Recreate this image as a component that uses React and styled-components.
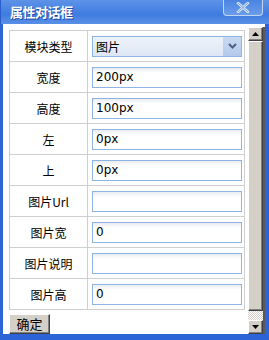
import React from "react";
import styled, { createGlobalStyle } from "styled-components";

const rows = [
  { label: "模块类型", type: "select", value: "图片" },
  { label: "宽度", value: "200px" },
  { label: "高度", value: "100px" },
  { label: "左", value: "0px" },
  { label: "上", value: "0px" },
  { label: "图片Url", value: "" },
  { label: "图片宽", value: "0" },
  { label: "图片说明", value: "" },
  { label: "图片高", value: "0" },
];

const App = () => {
  return (
    <>
      <GlobalStyle />
      <Window>
        <TitleBar>
          <Title>属性对话框</Title>
          <CloseButton>
            <svg width="14" height="11" viewBox="0 0 14 11">
              <path
                d="M2 1 L12 10 M12 1 L2 10"
                stroke="#dfe9f7"
                strokeWidth="2.6"
                strokeLinecap="round"
              />
              <path
                d="M2 1 L12 10 M12 1 L2 10"
                stroke="#6f96d6"
                strokeWidth="0.9"
                strokeLinecap="round"
              />
            </svg>
          </CloseButton>
        </TitleBar>
        <Body>
          <Content>
            <Table>
              <tbody>
                {rows.map((row) => (
                  <tr key={row.label}>
                    <LabelCell>{row.label}</LabelCell>
                    <FieldCell>
                      {row.type === "select" ? (
                        <Select>
                          <SelectText>{row.value}</SelectText>
                          <SelectArrow>
                            <svg width="9" height="6" viewBox="0 0 9 6">
                              <path
                                d="M1 1 L4.5 4.5 L8 1"
                                fill="none"
                                stroke="#4d6185"
                                strokeWidth="2"
                              />
                            </svg>
                          </SelectArrow>
                        </Select>
                      ) : (
                        <Input defaultValue={row.value} />
                      )}
                    </FieldCell>
                  </tr>
                ))}
              </tbody>
            </Table>
            <OkButton>确定</OkButton>
          </Content>
          <Scrollbar>
            <ScrollButton>
              <svg width="7" height="4" viewBox="0 0 7 4">
                <path d="M0 4 L3.5 0 L7 4 Z" fill="#000" />
              </svg>
            </ScrollButton>
            <Thumb />
            <Track />
            <ScrollButton>
              <svg width="7" height="4" viewBox="0 0 7 4">
                <path d="M0 0 L3.5 4 L7 0 Z" fill="#000" />
              </svg>
            </ScrollButton>
          </Scrollbar>
        </Body>
      </Window>
    </>
  );
};

const GlobalStyle = createGlobalStyle`
  body {
    margin: 0;
    background: #fff;
    font-family: "Noto Sans CJK SC", "DejaVu Sans", sans-serif;
  }
`;

const Window = styled.div`
  width: 269px;
  height: 340px;
  display: flex;
  flex-direction: column;
  box-sizing: border-box;
  background: #2c63d6;
`;

const TitleBar = styled.div`
  height: 24px;
  flex-shrink: 0;
  display: flex;
  align-items: flex-start;
  justify-content: space-between;
  padding: 0 6px 0 9px;
  background: linear-gradient(#5d93e8, #3f7ce0 60%, #5a90e6);
  border-left: 1px solid #2a5ccc;
`;

const Title = styled.div`
  margin-top: 3px;
  color: #fff;
  font-size: 13px;
  font-weight: bold;
  line-height: 18px;
  letter-spacing: -0.5px;
  text-shadow: 1px 1px 0 #1d4ba8;
`;

const CloseButton = styled.div`
  width: 40px;
  height: 16px;
  box-sizing: border-box;
  display: flex;
  align-items: center;
  justify-content: center;
  border: 1px solid #c2d6f2;
  border-top: none;
  border-radius: 0 0 4px 4px;
  background: linear-gradient(#4a84e2, #6a9de9);
`;

const Body = styled.div`
  flex: 1;
  display: flex;
  background: #fff;
  margin: 0 4px 6px 3px;
  min-height: 0;
`;

const Content = styled.div`
  flex: 1;
  padding: 6px 4px 0 6px;
  display: flex;
  flex-direction: column;
  align-items: flex-start;
  overflow: hidden;
`;

const Table = styled.table`
  width: 236px;
  border-collapse: collapse;
  border: 1px solid #cfcfcf;
`;

const LabelCell = styled.td`
  width: 77px;
  height: 30px;
  padding: 0;
  border: 1px solid #cfcfcf;
  text-align: center;
  font-size: 12px;
  color: #000;
`;

const FieldCell = styled.td`
  padding: 0 0 0 4px;
  border: 1px solid #cfcfcf;
  vertical-align: middle;
`;

const Input = styled.input`
  display: block;
  width: 150px;
  height: 21px;
  box-sizing: border-box;
  border: 1px solid #8fb3e3;
  padding: 0 3px;
  margin: 0;
  background: linear-gradient(#e9ecef 0, #fff 5px);
  font-family: "DejaVu Sans", sans-serif;
  font-size: 12px;
  color: #000;
  outline: none;
`;

const Select = styled.div`
  width: 150px;
  height: 21px;
  box-sizing: border-box;
  border: 1px solid #8fb3e3;
  display: flex;
  align-items: stretch;
  background: linear-gradient(#eef3fa, #dde7f4);
`;

const SelectText = styled.div`
  flex: 1;
  padding-left: 3px;
  font-size: 12px;
  line-height: 19px;
  color: #000;
`;

const SelectArrow = styled.div`
  width: 18px;
  display: flex;
  align-items: center;
  justify-content: center;
  background: linear-gradient(#c9daf1, #b3caeb);
`;

const OkButton = styled.button`
  margin-top: 4px;
  width: 41px;
  height: 20px;
  padding: 0;
  box-sizing: border-box;
  background: #d4d0c8;
  border: 1px solid;
  border-color: #fff #404040 #404040 #fff;
  box-shadow: inset -1px -1px 0 #808080;
  font-family: "Noto Sans CJK SC", sans-serif;
  font-size: 13px;
  line-height: 16px;
  color: #000;
`;

const Scrollbar = styled.div`
  width: 15px;
  margin-top: 3px;
  display: flex;
  flex-direction: column;
  border-right: 2px solid #5a5a5a;
`;

const ScrollButton = styled.div`
  height: 14px;
  flex-shrink: 0;
  box-sizing: border-box;
  display: flex;
  align-items: center;
  justify-content: center;
  background: #d4d0c8;
  border: 1px solid;
  border-color: #fff #404040 #404040 #fff;
  box-shadow: inset -1px -1px 0 #808080;
`;

const Thumb = styled(ScrollButton)`
  flex: 1;
`;

const Track = styled.div`
  height: 9px;
  flex-shrink: 0;
  background: repeating-conic-gradient(#d4d0c8 0 25%, #fff 0 50%) 0 0 / 2px 2px;
`;

export default App;
